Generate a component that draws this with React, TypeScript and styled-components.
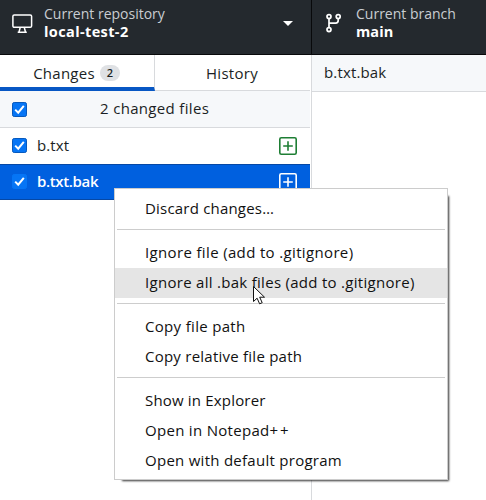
import React from "react";
import styled, { createGlobalStyle, css } from "styled-components";

const GlobalStyle = createGlobalStyle`
  * { box-sizing: border-box; }
  body {
    margin: 0;
    background: #fff;
    color: #1b1f24;
    font: 15px "Open Sans", "Noto Sans", sans-serif;
    overflow: hidden;
  }
  svg { display: block; flex: none; }
`;

const Window = styled.div`
  position: relative;
  width: 486px;
  height: 500px;
  display: flex;
  flex-direction: column;
  overflow: hidden;
`;

const Toolbar = styled.header`
  display: grid;
  grid-template-columns: 312px 1fr;
  height: 55px;
  flex: none;
  background: #24292e;
  border-bottom: 1px solid #08090b;
`;

const ToolbarButton = styled.div<{ $gap: number; $divider?: boolean }>`
  display: flex;
  align-items: flex-start;
  gap: ${(p) => p.$gap}px;
  padding: 4px 18px 0 12px;
  ${(p) => p.$divider && css`border-right: 1px solid #08090b;`}
`;

const ToolbarIcon = styled.span`
  margin-top: 9px;
`;

const ToolbarText = styled.div`
  flex: 1;
  display: flex;
  flex-direction: column;
`;

const Text = styled.span<{ $ls?: number }>`
  white-space: pre;
  letter-spacing: ${(p) => p.$ls ?? 0}px;
`;

const Caption = styled(Text)`
  font-size: 14px;
  line-height: 19px;
  color: #c9cdd2;
`;

const Title = styled(Text)`
  font-size: 14.5px;
  line-height: 17px;
  font-weight: 700;
  color: #fff;
`;

const Caret = styled.span`
  margin-top: 17px;
  border: 5px solid transparent;
  border-top-color: #fff;
  border-bottom: 0;
`;

const Body = styled.div`
  flex: 1;
  display: grid;
  grid-template-columns: 312px 1fr;
`;

const Sidebar = styled.aside`
  border-right: 1px solid #d8dadd;
  padding-right: 1px;
`;

const Tabs = styled.nav`
  display: grid;
  grid-template-columns: 155px 1fr;
  height: 36px;
`;

const Tab = styled.div<{ $active?: boolean }>`
  display: flex;
  justify-content: center;
  align-items: center;
  gap: 5px;
  padding-top: ${(p) => (p.$active ? 4 : 1)}px;
  padding-right: 1px;
  border-bottom: ${(p) => (p.$active ? "4px solid #0757c4" : "1px solid #d8dadd")};
  ${(p) => p.$active && css`border-right: 1px solid #d8dadd;`}
`;

const Counter = styled.span`
  width: 20px;
  height: 16px;
  border-radius: 8px;
  background: #dfe1e4;
  font-size: 11px;
  font-weight: 600;
  line-height: 16px;
  text-align: center;
`;

const Summary = styled.div`
  display: flex;
  align-items: center;
  height: 37px;
  padding-left: 12px;
  background: #f6f8fa;
  border-bottom: 1px solid #d8dadd;
`;

const SummaryText = styled(Text)`
  margin-left: 73px;
  padding-bottom: 2px;
`;

const FileRow = styled.div<{ $selected?: boolean }>`
  display: flex;
  align-items: center;
  height: 36px;
  padding: 0 13px 1px 12px;
  gap: 10px;
  ${(p) =>
    p.$selected &&
    css`
      background: #0060df;
      border-top: 1px solid #0648a5;
      border-bottom: 1px solid #0648a5;
      color: #fff;
      font-weight: 600;
    `}
`;

const FileName = styled(Text)`
  flex: 1;
  padding-bottom: 1px;
`;

const Diff = styled.main``;

const DiffHeader = styled.div`
  height: 37px;
  padding-left: 12px;
  line-height: 35px;
  background: #f6f8fa;
  border-bottom: 1px solid #d8dadd;
`;

const Menu = styled.div`
  position: absolute;
  left: 114px;
  top: 188px;
  width: 334px;
  height: 292px;
  padding-top: 5px;
  background: #fff;
  border: 1px solid #ccc;
`;

const MenuShadow = styled.div`
  position: absolute;
  left: 122px;
  top: 196px;
  width: 325px;
  height: 283px;
  box-shadow: 1px 1px 2px 1px rgba(0, 0, 0, 0.8);
`;

const MenuItem = styled.div<{ $hover?: boolean }>`
  height: 30px;
  padding-left: 30px;
  line-height: 29px;
  color: #111;
  background: ${(p) => (p.$hover ? "#e5e5e5" : "transparent")};
`;

const Separator = styled.div`
  height: 1px;
  margin: 5px 2px 8px;
  background: #cdcdcd;
`;

const Pointer = styled.svg`
  position: absolute;
  left: 252px;
  top: 285px;
`;

const Check = ({ plain }: { plain?: boolean }) => (
  <svg width="15" height="15" viewBox="0 0 15 15" fill="none">
    <rect x=".5" y=".5" width="14" height="14" rx="1.7" fill="#0675f5" stroke={plain ? "#0675f5" : "#0659bd"} />
    <path d="M3.2 7.6 6.2 10.7 11.8 3.8" stroke="#fff" strokeWidth="2" />
  </svg>
);

const Added = ({ color }: { color: string }) => (
  <svg width="18" height="18" viewBox="0 0 18 18" fill="none" stroke={color} strokeWidth="1.6">
    <rect x=".8" y=".8" width="16.4" height="16.4" rx="1.5" />
    <path d="M9 4.2v9.6M4.2 9h9.6" />
  </svg>
);

const Desktop = () => (
  <svg width="21" height="21" viewBox="0 0 21 21" fill="none" stroke="#fff" strokeWidth="1.5">
    <rect x=".9" y="1.9" width="18.7" height="12.4" rx="1.4" />
    <path d="M8.2 14.5 7.1 18.8M12.3 14.5l1.1 4.3M5.7 19.2h9.1" />
  </svg>
);

const Branch = () => (
  <svg width="18" height="21" viewBox="0 0 18 21" fill="none" stroke="#fff" strokeWidth="1.7">
    <circle cx="5" cy="3.6" r="2" />
    <circle cx="14.2" cy="3.6" r="2" />
    <circle cx="5" cy="16.6" r="2" />
    <path d="M5 5.6v9M14.2 5.6V7.6q0 2.6-2.6 2.6H5" />
  </svg>
);

interface Entry {
  label: string;
  ls: number;
  tail?: string;
  hover?: boolean;
}

const menuGroups: Entry[][] = [
  [{ label: "Discard changes…", ls: 0.2 }],
  [
    { label: "Ignore file (add to .gitignore)", ls: 0.35 },
    { label: "Ignore all .bak files (add to .gitignore)", ls: 0.29, hover: true },
  ],
  [
    { label: "Copy file path", ls: 0.32 },
    { label: "Copy relative file path", ls: 0.24 },
  ],
  [
    { label: "Show in Explorer", ls: 0.18 },
    { label: "Open in Notepad", ls: 0.3, tail: "++" },
    { label: "Open with default program", ls: 0.27 },
  ],
];

export default function App() {
  return (
    <>
      <GlobalStyle />
      <Window>
        <Toolbar>
          <ToolbarButton $gap={11} $divider>
            <ToolbarIcon><Desktop /></ToolbarIcon>
            <ToolbarText>
              <Caption>Current repository</Caption>
              <Title $ls={0.38}>local-test-2</Title>
            </ToolbarText>
            <Caret />
          </ToolbarButton>
          <ToolbarButton $gap={14}>
            <ToolbarIcon><Branch /></ToolbarIcon>
            <ToolbarText>
              <Caption>Current branch</Caption>
              <Title $ls={0.1}>main</Title>
            </ToolbarText>
          </ToolbarButton>
        </Toolbar>
        <Body>
          <Sidebar>
            <Tabs>
              <Tab $active>
                <Text $ls={0.25}>Changes</Text>
                <Counter>2</Counter>
              </Tab>
              <Tab><Text $ls={0.28}>History</Text></Tab>
            </Tabs>
            <Summary>
              <Check />
              <SummaryText $ls={0.33}>2 changed files</SummaryText>
            </Summary>
            <FileRow>
              <Check />
              <FileName $ls={0.1}>b.txt</FileName>
              <Added color="#1e7e34" />
            </FileRow>
            <FileRow $selected>
              <Check plain />
              <FileName $ls={-0.35}>b.txt.bak</FileName>
              <Added color="#fff" />
            </FileRow>
          </Sidebar>
          <Diff>
            <DiffHeader><Text $ls={0.15}>b.txt.bak</Text></DiffHeader>
          </Diff>
        </Body>
        <MenuShadow />
        <Menu>
          {menuGroups.map((group, i) => (
            <React.Fragment key={i}>
              {i > 0 && <Separator />}
              {group.map((item) => (
                <MenuItem key={item.label} $hover={item.hover}>
                  <Text $ls={item.ls}>{item.label}</Text>
                  {item.tail && <Text $ls={1.9}>{item.tail}</Text>}
                </MenuItem>
              ))}
            </React.Fragment>
          ))}
        </Menu>
        <Pointer width="14" height="21" viewBox="0 0 14 21">
          <path d="M1.5 1.5v15l3.6-3.3 2.5 5.6 2.6-1.1-2.5-5.5h4.8Z" fill="#fff" stroke="#111" />
        </Pointer>
      </Window>
    </>
  );
}
